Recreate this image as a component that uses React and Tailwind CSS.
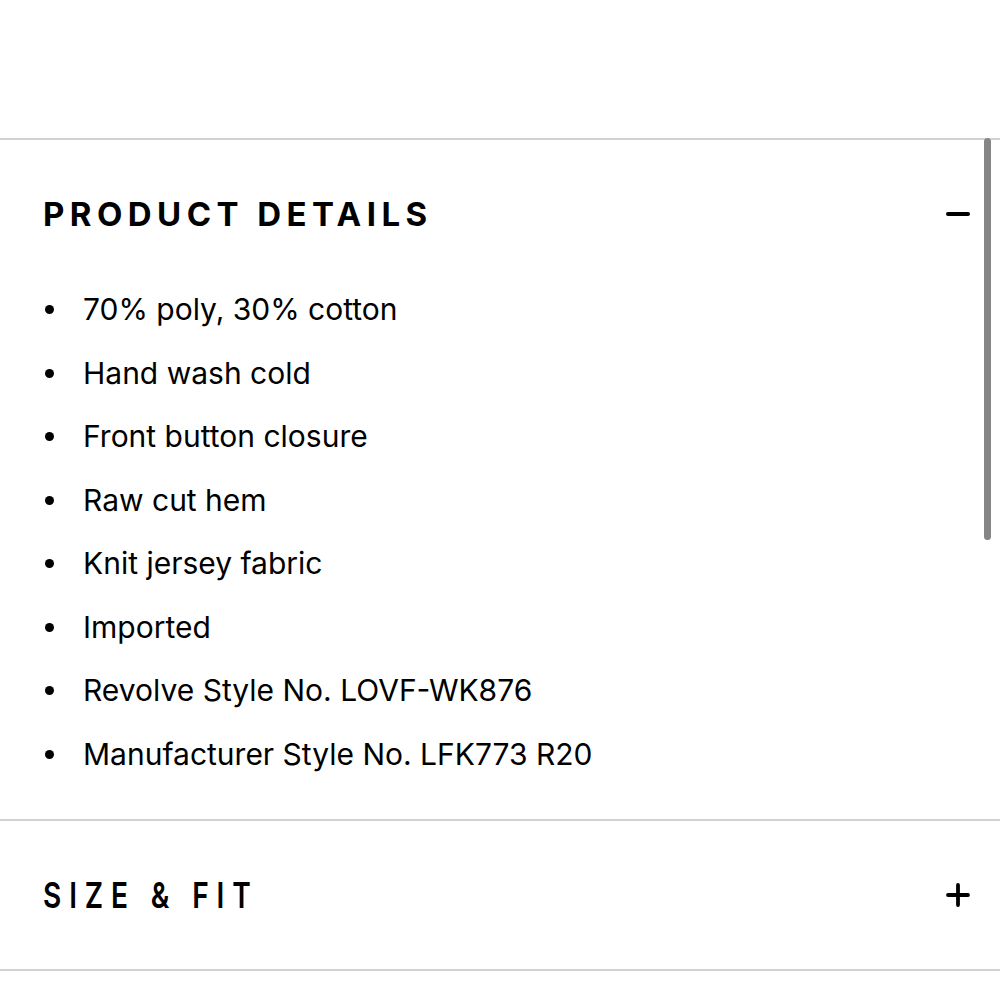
import React from 'react'

const details = [
  '70% poly, 30% cotton',
  'Hand wash cold',
  'Front button closure',
  'Raw cut hem',
  'Knit jersey fabric',
  'Imported',
  'Revolve Style No. LOVF-WK876',
  'Manufacturer Style No. LFK773 R20',
]

const Minus = () => (
  <svg width="24" height="24" viewBox="0 0 24 24" className="block">
    <line x1="2" y1="12" x2="22" y2="12" stroke="#000" strokeWidth="4" strokeLinecap="round" />
  </svg>
)

const Plus = () => (
  <svg width="24" height="24" viewBox="0 0 24 24" className="block">
    <line x1="2" y1="12" x2="22" y2="12" stroke="#000" strokeWidth="3.8" strokeLinecap="round" />
    <line x1="12" y1="2" x2="12" y2="22" stroke="#000" strokeWidth="3.8" strokeLinecap="round" />
  </svg>
)

export default function App() {
  return (
    <div className="relative w-[1000px] h-[1000px] bg-white text-black font-['Inter','Noto_Sans',sans-serif] overflow-hidden">
      <div className="h-[138px]" />
      <div className="h-[2px] bg-[#d2d2d2]" />

      {/* product details, open */}
      <section className="pl-[43px] pr-[30px]">
        <div className="flex items-center justify-between pt-[54px] h-[94px]">
          <h2 className="text-[33px] leading-[40px] font-bold tracking-[0.165em]">PRODUCT DETAILS</h2>
          <Minus />
        </div>
        <ul className="mt-[44px] mb-[33px]">
          {details.map((d) => (
            <li key={d} className="flex items-center h-[63.5px] text-[30px]">
              <span className="w-[9px] h-[9px] rounded-full bg-black ml-[2px] mr-[29px]" />
              {d}
            </li>
          ))}
        </ul>
      </section>
      <div className="h-[2px] bg-[#d2d2d2]" />

      {/* size & fit, closed */}
      <section className="pl-[43px] pr-[30px] h-[148px] flex items-center justify-between">
        <h2 className="inline-block origin-left scale-x-[0.78] text-[36px] leading-[40px] font-semibold tracking-[0.28em] whitespace-nowrap">
          SIZE &amp; FIT
        </h2>
        <Plus />
      </section>
      <div className="h-[2px] bg-[#d2d2d2]" />

      {/* scrollbar thumb */}
      <div className="absolute right-[9px] top-[138px] w-[7px] h-[402px] rounded-full bg-[#858585]" />
    </div>
  )
}
